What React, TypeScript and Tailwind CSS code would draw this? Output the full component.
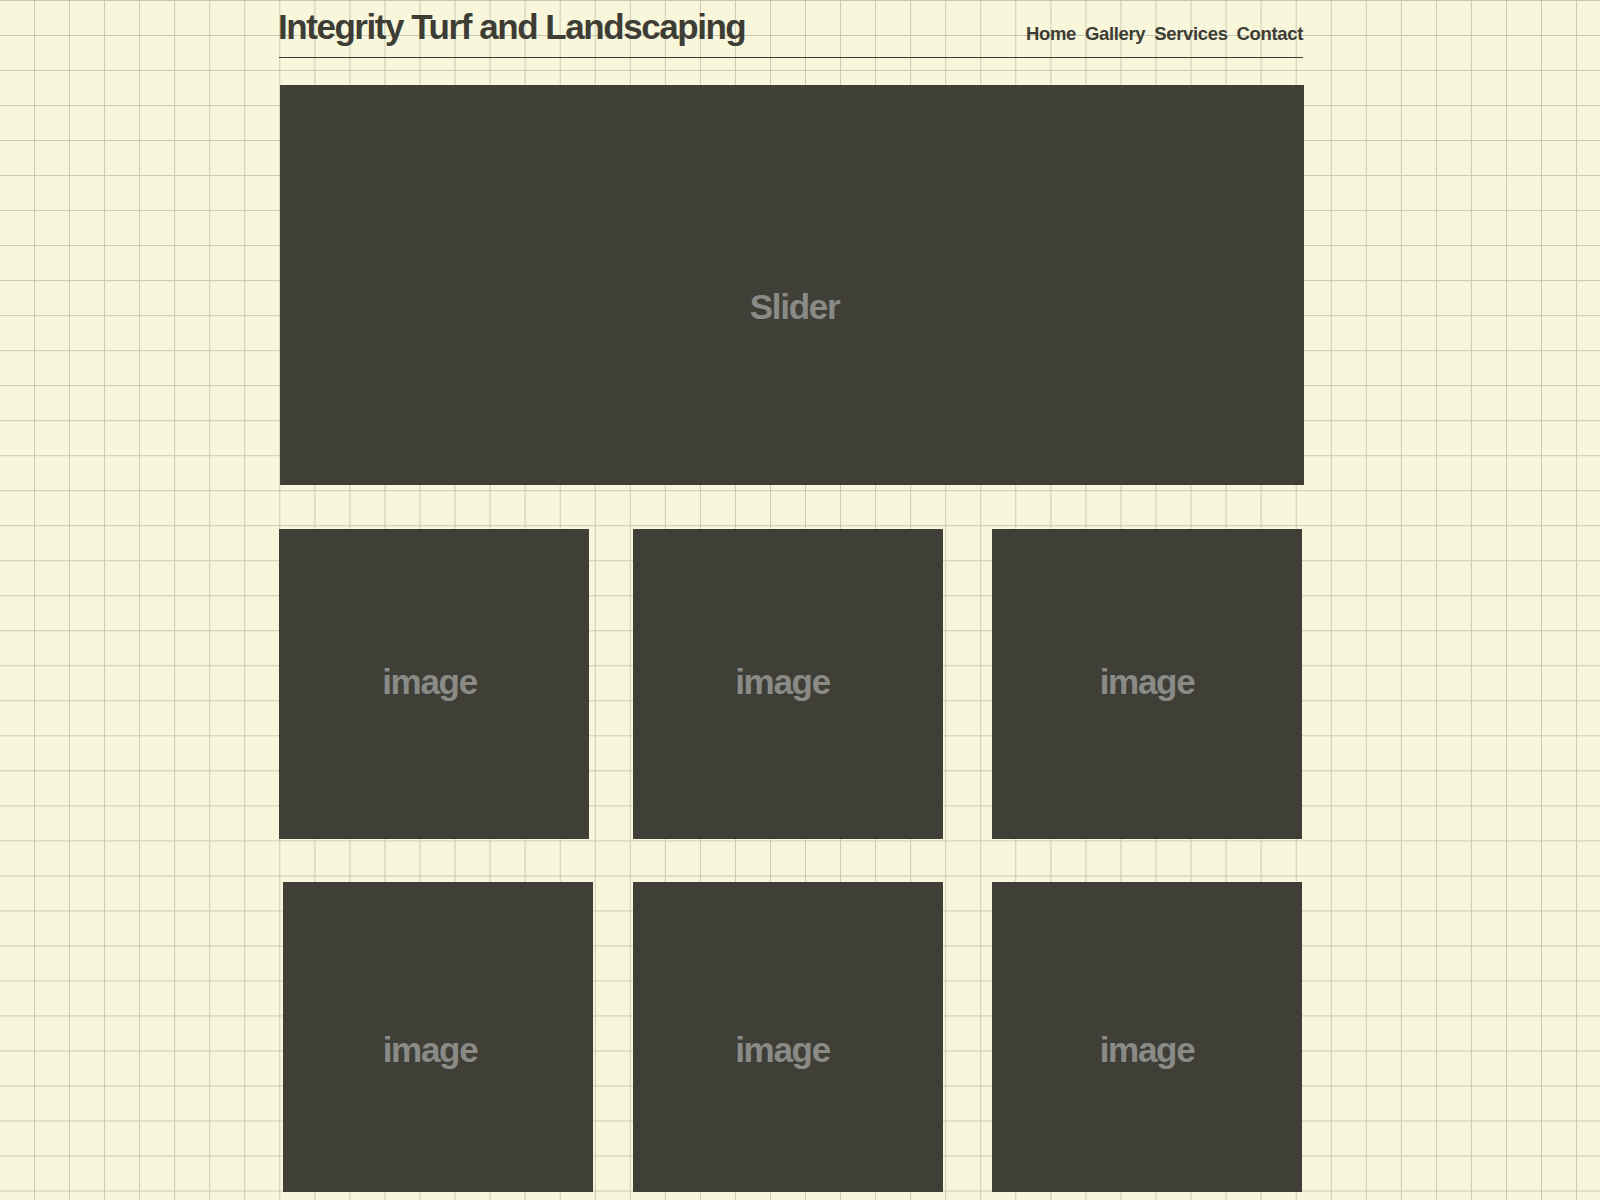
import React from 'react'

const navItems = ['Home', 'Gallery', 'Services', 'Contact']

type Tile = { shift: string; pad: string }

// each row of placeholder tiles, with the small offsets the mockup has
const rows: { top: string; tiles: Tile[] }[] = [
  {
    top: 'mt-[44px]',
    tiles: [
      { shift: 'ml-0', pad: 'pt-[133px] pr-[9px]' },
      { shift: 'ml-[44px]', pad: 'pt-[133px] pr-[11px]' },
      { shift: 'ml-[49px]', pad: 'pt-[133px] pr-0' },
    ],
  },
  {
    top: 'mt-[43px]',
    tiles: [
      { shift: 'ml-[4px]', pad: 'pt-[148px] pr-[16px]' },
      { shift: 'ml-[40px]', pad: 'pt-[148px] pr-[11px]' },
      { shift: 'ml-[49px]', pad: 'pt-[148px] pr-0' },
    ],
  },
]

function ImageTile({ shift, pad }: Tile) {
  return (
    <div className={`${shift} w-[310px] h-[310px] shrink-0 bg-[#3f3f37] flex justify-center ${pad}`}>
      <span className="text-[35px] font-bold leading-[40px] tracking-[-1.3px] text-[#8a8a86]">image</span>
    </div>
  )
}

export default function App() {
  return (
    <div
      className="min-h-screen w-full bg-[#f8f7dc] bg-[linear-gradient(to_right,#cbc9b3_1px,transparent_1px),linear-gradient(to_bottom,#cbc9b3_1px,transparent_1px)] bg-[size:35.05px_35.03px] bg-[position:34px_0px]"
      style={{ fontFamily: '"Liberation Sans", Arial, sans-serif' }}
    >
      <div className="ml-[279px] w-[1025px] pb-[8px]">
        {/* Header */}
        <header className="w-[1024px] flex items-end justify-between pt-[7px] pb-[10px] border-b border-[#3c3c34]">
          <h1 className="-ml-[1px] text-[35px] font-bold leading-[40px] tracking-[-1.45px] text-[#3d3d35]">
            Integrity Turf and Landscaping
          </h1>
          <nav className="flex gap-[9px] mb-[3px]">
            {navItems.map((item) => (
              <a key={item} href="#" className="text-[18.5px] font-bold leading-[21px] tracking-[-0.35px] text-[#3d3d35]">
                {item}
              </a>
            ))}
          </nav>
        </header>

        {/* Slider */}
        <div className="mt-[27px] ml-[1px] w-[1024px] h-[400px] bg-[#3f3f37] flex justify-center pt-[202px] pl-[5px]">
          <span className="text-[35px] font-bold leading-[40px] tracking-[-1.3px] text-[#8a8a86]">Slider</span>
        </div>

        {/* Image grid */}
        {rows.map((row, i) => (
          <div key={i} className={`${row.top} flex`}>
            {row.tiles.map((t, j) => (
              <ImageTile key={j} {...t} />
            ))}
          </div>
        ))}
      </div>
    </div>
  )
}
